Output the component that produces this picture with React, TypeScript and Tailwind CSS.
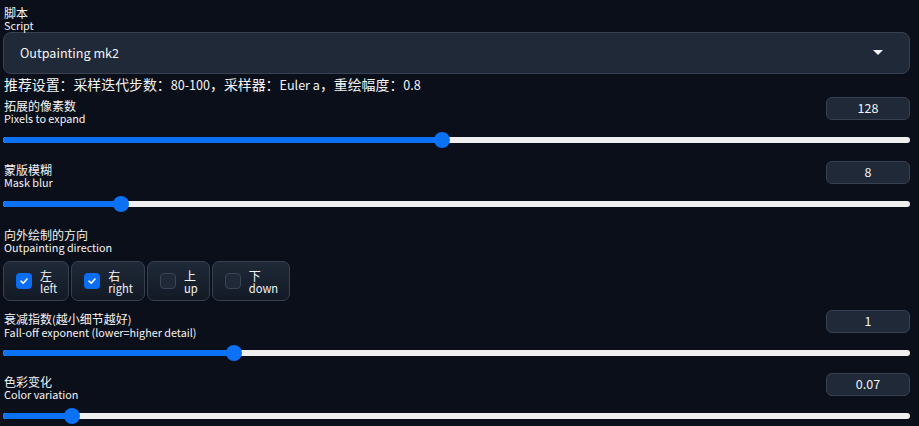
import React from 'react';

const font = { fontFamily: '"Noto Sans CJK SC", "Noto Sans", sans-serif' };

interface SliderRowProps {
  zh: React.ReactNode;
  en: string;
  value: string;
  /** thumb centre, 0..1 of track width */
  pct: number;
}

function Labels({ zh, en }: { zh: React.ReactNode; en: string }) {
  return (
    <div className="text-[#f3f4f6] pl-[1px]">
      <div className="text-[12px] leading-[13px]">{zh}</div>
      <div className="text-[10.8px] leading-[12px]">{en}</div>
    </div>
  );
}

function Slider({ pct }: { pct: number }) {
  return (
    <div className="relative h-[16px] flex items-center">
      <div className="relative w-full h-[6px] rounded-full bg-[#efefef] overflow-hidden">
        <div className="absolute left-0 top-0 h-full bg-[#0b72f5]" style={{ width: `${pct * 100}%` }} />
      </div>
      <div
        className="absolute top-0 w-[16px] h-[16px] rounded-full bg-[#0b72f5] -ml-[8px]"
        style={{ left: `${pct * 100}%` }}
      />
    </div>
  );
}

function SliderRow({ zh, en, value, pct }: SliderRowProps) {
  return (
    <div>
      <div className="flex justify-between items-start h-[23px]">
        <div className="pt-[2px]">
          <Labels zh={zh} en={en} />
        </div>
        <div className="w-[84px] h-[23px] rounded-[6px] border border-[#374151] bg-[#1f2937] flex items-center justify-center text-[12.5px] text-[#f3f4f6]">
          {value}
        </div>
      </div>
      <div className="mt-[12px]">
        <Slider pct={pct} />
      </div>
    </div>
  );
}

function Check({ zh, en, checked }: { zh: string; en: string; checked: boolean }) {
  return (
    <div className="h-[40px] flex items-center gap-[8px] pl-[12px] pr-[11px] rounded-[7px] border border-[#374151] bg-gradient-to-b from-[#1f2937] to-[#131a26]">
      {checked ? (
        <div className="w-[16px] h-[16px] rounded-[4px] bg-[#0b6ef2] flex items-center justify-center">
          <svg width="10" height="10" viewBox="0 0 10 10" fill="none">
            <path d="M2 5.2 L4.2 7.2 L8 3" stroke="white" strokeWidth="1.6" strokeLinecap="round" strokeLinejoin="round" />
          </svg>
        </div>
      ) : (
        <div className="w-[16px] h-[16px] rounded-[4px] bg-[#1f2937] border border-[#3b4656]" />
      )}
      <div className="text-[#f3f4f6] flex flex-col pt-[1px]">
        <span className="text-[12px] leading-[13px]">{zh}</span>
        <span className="text-[11.2px] leading-[13px]">{en}</span>
      </div>
    </div>
  );
}

export default function App() {
  return (
    <div style={font} className="w-[919px] h-[426px] overflow-hidden bg-[#0b0f19] pl-[3px] pr-[9px] pt-[6px]">
      <Labels zh="脚本" en="Script" />

      <div className="mt-[1px] h-[42px] rounded-[8px] border border-[#374151] bg-[#1f2937] flex items-center justify-between pl-[16px] pr-[26px]">
        <span className="text-[12.6px] text-[#f3f4f6]">Outpainting mk2</span>
        <svg width="10" height="6" viewBox="0 0 10 6">
          <path d="M0 0 L10 0 L5 5 Z" fill="#f3f4f6" />
        </svg>
      </div>

      <div className="mt-[1px] pl-[1px] text-[13.9px] leading-[18px] text-[#f3f4f6] whitespace-pre">
        推荐设置：采样迭代步数：<span className="text-[12.6px]">80-100</span>，采样器：<span className="text-[12.6px]">Euler a</span>，重绘幅度：<span className="text-[12.6px]">0.8</span>
      </div>

      <div className="mt-[3px]">
        <SliderRow zh="拓展的像素数" en="Pixels to expand" value="128" pct={0.484} />
      </div>

      <div className="mt-[13px]">
        <SliderRow zh="蒙版模糊" en="Mask blur" value="8" pct={0.13} />
      </div>

      <div className="mt-[16px]">
        <Labels zh="向外绘制的方向" en="Outpainting direction" />
        <div className="mt-[8px] flex gap-[2px]">
          <Check zh="左" en="left" checked />
          <Check zh="右" en="right" checked />
          <Check zh="上" en="up" checked={false} />
          <Check zh="下" en="down" checked={false} />
        </div>
      </div>

      <div className="mt-[9px]">
        <SliderRow
          zh={
            <>
              衰减指数<span className="text-[11px]">(</span>越小细节越好<span className="text-[11px]">)</span>
            </>
          }
          en="Fall-off exponent (lower=higher detail)"
          value="1"
          pct={0.255}
        />
      </div>

      <div className="mt-[12px]">
        <SliderRow zh="色彩变化" en="Color variation" value="0.07" pct={0.076} />
      </div>
    </div>
  );
}
